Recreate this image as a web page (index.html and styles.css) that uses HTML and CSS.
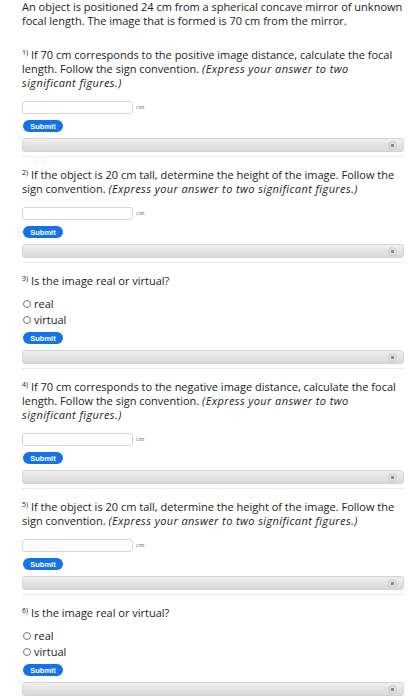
FILE: index.html
```html
<!DOCTYPE html>
<html lang="en">
<head>
    <meta charset="UTF-8">
    <meta name="viewport" content="width=device-width, initial-scale=1.0">
    <title>Concave Mirror</title>
    <link rel="stylesheet" href="styles.css">
</head>
<body>
    <p class="intro">An object is positioned 24 cm from a spherical concave mirror of unknown focal length. The image that is formed is 70 cm from the mirror.</p>

    <div class="question">
        <p class="prompt"><sup>1)</sup> If 70 cm corresponds to the positive image distance, calculate the focal length. Follow the sign convention. <em>(Express your answer to two significant figures.)</em></p>
        <div class="answer-row"><input type="text" class="answer"><span class="unit">cm</span></div>
        <button class="submit">Submit</button>
        <div class="hint-bar"><span class="hint-icon"></span></div>
    </div>

    <div class="question">
        <p class="prompt"><sup>2)</sup> If the object is 20 cm tall, determine the height of the image. Follow the sign convention. <em>(Express your answer to two significant figures.)</em></p>
        <div class="answer-row"><input type="text" class="answer"><span class="unit">cm</span></div>
        <button class="submit">Submit</button>
        <div class="hint-bar"><span class="hint-icon"></span></div>
    </div>

    <div class="question">
        <p class="prompt"><sup>3)</sup> Is the image real or virtual?</p>
        <div class="choices">
            <label><input type="radio" name="q3"> real</label>
            <label><input type="radio" name="q3"> virtual</label>
        </div>
        <button class="submit">Submit</button>
        <div class="hint-bar"><span class="hint-icon"></span></div>
    </div>

    <div class="question">
        <p class="prompt"><sup>4)</sup> If 70 cm corresponds to the negative image distance, calculate the focal length. Follow the sign convention. <em>(Express your answer to two significant figures.)</em></p>
        <div class="answer-row"><input type="text" class="answer"><span class="unit">cm</span></div>
        <button class="submit">Submit</button>
        <div class="hint-bar"><span class="hint-icon"></span></div>
    </div>

    <div class="question">
        <p class="prompt"><sup>5)</sup> If the object is 20 cm tall, determine the height of the image. Follow the sign convention. <em>(Express your answer to two significant figures.)</em></p>
        <div class="answer-row"><input type="text" class="answer"><span class="unit">cm</span></div>
        <button class="submit">Submit</button>
        <div class="hint-bar"><span class="hint-icon"></span></div>
    </div>

    <div class="question">
        <p class="prompt"><sup>6)</sup> Is the image real or virtual?</p>
        <div class="choices">
            <label><input type="radio" name="q6"> real</label>
            <label><input type="radio" name="q6"> virtual</label>
        </div>
        <button class="submit">Submit</button>
        <div class="hint-bar"><span class="hint-icon"></span></div>
    </div>
</body>
</html>
```

FILE: styles.css
```css
body {
    font-family: 'Open Sans', sans-serif;
    font-size: 11px;
    line-height: 14px;
    color: #222;
    background-color: white;
    margin: 0;
    padding: 0 12px 0 22px;
}
p {
    margin: 0;
}
.intro {
    margin-bottom: 20px;
}
.question {
    display: flex;
    flex-direction: column;
    align-items: flex-start;
    border-bottom: 1px solid #ebebeb;
    padding-bottom: 4px;
    margin-bottom: 11px;
}
.prompt {
    margin-bottom: 10px;
}
.prompt sup {
    font-size: 7px;
    line-height: 0;
    vertical-align: 4px;
}
.prompt em {
    font-style: italic;
    letter-spacing: 0.4px;
}
.answer-row {
    display: flex;
    align-items: center;
    gap: 3px;
    margin-bottom: 6px;
}
.answer {
    width: 111px;
    height: 13px;
    box-sizing: border-box;
    border: 1px solid #d6d6d6;
    border-radius: 3px;
    padding: 0 3px;
    margin: 0;
}
.unit {
    font-family: 'Liberation Serif', serif;
    font-size: 7px;
    color: #888;
}
.choices {
    display: flex;
    flex-direction: column;
    margin-top: -2px;
    margin-bottom: 4px;
}
.choices label {
    display: flex;
    align-items: center;
    gap: 3px;
    height: 16px;
}
.choices input {
    width: 8px;
    height: 8px;
    margin: 0 0 0 1px;
}
.submit {
    background-color: #1673e6;
    color: white;
    border: none;
    border-radius: 6px;
    font-family: 'Liberation Sans', sans-serif;
    font-size: 7.5px;
    font-weight: bold;
    height: 12px;
    width: 40px;
    padding: 0;
    margin: 0 0 6px 1px;
    cursor: pointer;
}
.hint-bar {
    align-self: stretch;
    height: 14px;
    box-sizing: border-box;
    border: 1px solid #d4d4d4;
    border-radius: 3px;
    background: linear-gradient(#f0f0f0, #d9d9d9);
    display: flex;
    align-items: center;
    justify-content: flex-end;
    padding-right: 6px;
}
.hint-icon {
    width: 7px;
    height: 7px;
    border-radius: 50%;
    background: radial-gradient(#888 0 1.5px, #e4e4e4 2px);
    border: 1px solid #c8c8c8;
}
```
